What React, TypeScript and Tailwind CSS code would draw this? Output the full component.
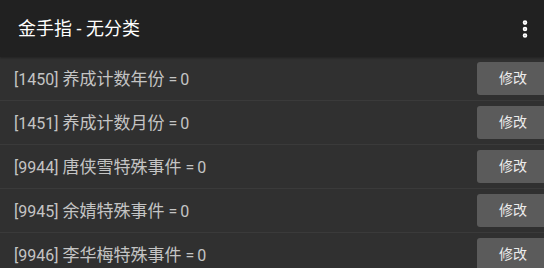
import { EllipsisVertical } from "lucide-react";

interface Cheat {
  id: number;
  name: string;
  value: number;
}

const cheats: Cheat[] = [
  { id: 1450, name: "养成计数年份", value: 0 },
  { id: 1451, name: "养成计数月份", value: 0 },
  { id: 9944, name: "唐侠雪特殊事件", value: 0 },
  { id: 9945, name: "余婧特殊事件", value: 0 },
  { id: 9946, name: "李华梅特殊事件", value: 0 },
];

const font = { fontFamily: 'Roboto, "Noto Sans CJK SC", sans-serif' };

const CheatRow = ({ cheat }: { cheat: Cheat }) => (
  <div className="flex h-[44px] items-center justify-between border-b border-[#3a3a3a]">
    <div className="flex items-center pl-[14px] pt-[2px] text-[16px] text-[#c4c4c4]">
      <span>[{cheat.id}]</span>
      <span className="ml-[4px] text-[17px]">{cheat.name}</span>
      <span className="ml-[4px]">=</span>
      <span className="ml-[3px]">{cheat.value}</span>
    </div>
    <button className="mr-[-5px] h-[33px] w-[72px] shrink-0 rounded-[3px] bg-[#5b5b5b] text-[14px] text-[#ececec]">
      修改
    </button>
  </div>
);

const App = () => {
  return (
    <div className="h-[268px] w-[544px] overflow-hidden bg-[#303030]" style={font}>
      {/* Toolbar */}
      <div className="flex h-[57px] items-center justify-between bg-[#212121] pl-[18px] pr-[8px] shadow-[0_1px_2px_rgba(0,0,0,0.3)]">
        <div className="text-[18px] text-white">金手指 - 无分类</div>
        <EllipsisVertical size={22} strokeWidth={3} className="text-white" />
      </div>

      {/* Cheat list */}
      <div>
        {cheats.map((c) => (
          <CheatRow key={c.id} cheat={c} />
        ))}
      </div>
    </div>
  );
};

export default App;
